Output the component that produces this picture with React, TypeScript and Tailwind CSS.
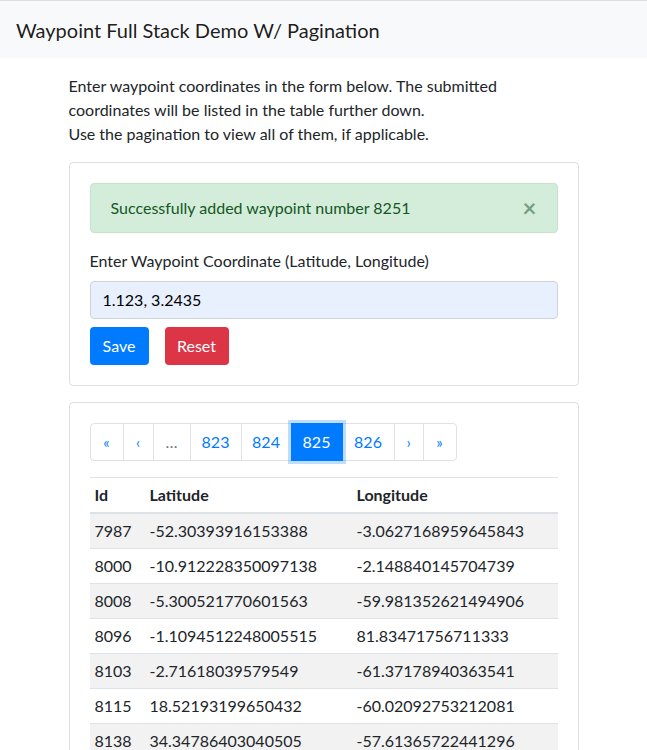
import React from "react";

const rows = [
  { id: 7987, lat: "-52.30393916153388", lng: "-3.0627168959645843" },
  { id: 8000, lat: "-10.912228350097138", lng: "-2.148840145704739" },
  { id: 8008, lat: "-5.300521770601563", lng: "-59.981352621494906" },
  { id: 8096, lat: "-1.1094512248005515", lng: "81.83471756711333" },
  { id: 8103, lat: "-2.71618039579549", lng: "-61.37178940363541" },
  { id: 8115, lat: "18.52193199650432", lng: "-60.02092753212081" },
  { id: 8138, lat: "34.34786403040505", lng: "-57.61365722441296" },
];

const pages = [
  { label: "«", kind: "nav", w: "w-[34px]" },
  { label: "‹", kind: "nav", w: "w-[31px]" },
  { label: "…", kind: "disabled", w: "w-[38px]" },
  { label: "823", kind: "page", w: "w-[52px]" },
  { label: "824", kind: "page", w: "w-[51px]" },
  { label: "825", kind: "active", w: "w-[52px]" },
  { label: "826", kind: "page", w: "w-[53px]" },
  { label: "›", kind: "nav", w: "w-[30px]" },
  { label: "»", kind: "nav", w: "w-[34px]" },
];

export default function App() {
  return (
    <div className="h-screen overflow-hidden bg-white font-['Lato',sans-serif] text-base leading-6 text-[#212529]">
      <div className="h-px bg-[#dedede]" />
      <nav className="flex h-[57px] items-center bg-[#f8f9fa] px-4">
        <span className="text-[20px] leading-[30px] text-black/90">Waypoint Full Stack Demo W/ Pagination</span>
      </nav>

      <div className="mx-auto w-[540px] px-[15px] pt-4">
        <p className="mb-4">
          Enter waypoint coordinates in the form below. The submitted coordinates will be listed in the table further down.
          <br />
          Use the pagination to view all of them, if applicable.
        </p>

        {/* form card */}
        <div className="mb-4 rounded border border-black/[0.125] p-5">
          <div className="mb-4 flex items-center justify-between rounded border border-[#c3e6cb] bg-[#d4edda] py-3 pl-5 pr-5 text-[#155724]">
            <span>Successfully added waypoint number 8251</span>
            <span className="text-[24px] font-bold leading-6 text-[#155724] opacity-50">×</span>
          </div>
          <label className="mb-2 block">Enter Waypoint Coordinate (Latitude, Longitude)</label>
          <div className="mb-2 flex h-[38px] items-center rounded border border-[#ced4da] bg-[#e8f0fe] px-3 text-black">
            1.123, 3.2435
          </div>
          <div className="flex gap-4">
            <button className="h-[38px] w-[59px] rounded bg-[#007bff] text-white">Save</button>
            <button className="h-[38px] w-[64px] rounded bg-[#dc3545] text-white">Reset</button>
          </div>
        </div>

        {/* table card */}
        <div className="rounded border border-black/[0.125] p-5">
          <ul className="mb-4 flex">
            {pages.map((p, i) => {
              const first = i === 0;
              const last = i === pages.length - 1;
              return (
                <li
                  key={i}
                  className={
                    "flex h-[38px] items-center justify-center border leading-5 " +
                    p.w +
                    " " +
                    (first ? "rounded-l " : "-ml-px ") +
                    (last ? "rounded-r " : "") +
                    (p.kind === "active"
                      ? "relative z-10 border-[#007bff] bg-[#007bff] text-white shadow-[0_0_0_3px_rgba(0,123,255,0.25)]"
                      : p.kind === "disabled"
                        ? "border-[#dee2e6] text-[#6c757d]"
                        : "border-[#dee2e6] text-[#007bff]") +
                    (p.kind === "nav" ? " text-[15px]" : "")
                  }
                >
                  {p.label}
                </li>
              );
            })}
          </ul>

          <table className="w-full border-collapse text-left">
            <thead>
              <tr className="border-t border-[#dee2e6]">
                <th className="w-[55px] border-b-2 border-[#dee2e6] px-[5px] py-[5px] font-bold">Id</th>
                <th className="w-[207px] border-b-2 border-[#dee2e6] px-[5px] py-[5px] font-bold">Latitude</th>
                <th className="border-b-2 border-[#dee2e6] px-[5px] py-[5px] font-bold">Longitude</th>
              </tr>
            </thead>
            <tbody>
              {rows.map((r, i) => (
                <tr key={r.id} className={"border-t border-[#dee2e6] " + (i % 2 === 0 ? "bg-black/5" : "")}>
                  <td className="px-[5px] py-[5px]">{r.id}</td>
                  <td className="px-[5px] py-[5px]">{r.lat}</td>
                  <td className="px-[5px] py-[5px]">{r.lng}</td>
                </tr>
              ))}
            </tbody>
          </table>
        </div>
      </div>
    </div>
  );
}
